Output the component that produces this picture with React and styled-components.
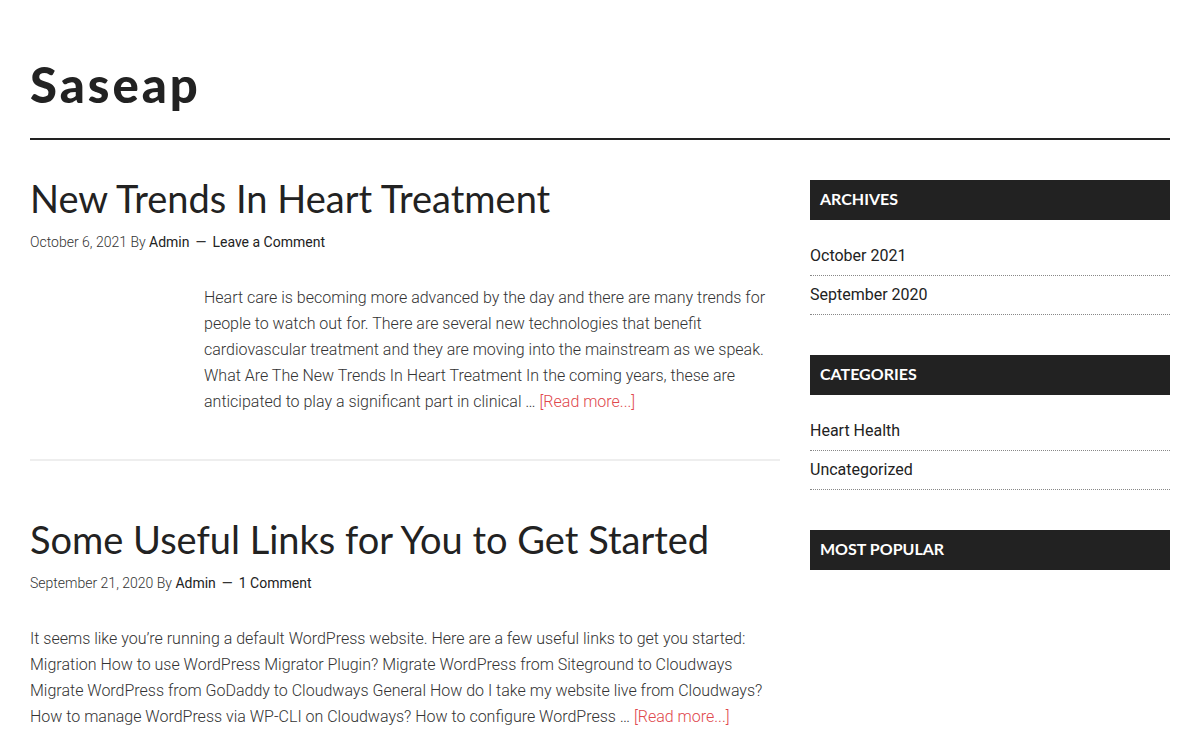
import styled, { createGlobalStyle } from 'styled-components'

const GlobalStyle = createGlobalStyle`
  body {
    margin: 0;
    background: #fff;
    color: #222;
    font-family: Roboto, "Liberation Sans", sans-serif;
  }
  a {
    text-decoration: none;
  }
`

const posts = [
  {
    title: 'New Trends In Heart Treatment',
    date: 'October 6, 2021',
    comments: 'Leave a Comment',
    indent: true,
    text: 'Heart care is becoming more advanced by the day and there are many trends for people to watch out for. There are several new technologies that benefit cardiovascular treatment and they are moving into the mainstream as we speak. What Are The New Trends In Heart Treatment In the coming years, these are anticipated to play a significant part in clinical …',
  },
  {
    title: 'Some Useful Links for You to Get Started',
    date: 'September 21, 2020',
    comments: '1 Comment',
    indent: false,
    text: 'It seems like you’re running a default WordPress website. Here are a few useful links to get you started: Migration How to use WordPress Migrator Plugin? Migrate WordPress from Siteground to Cloudways Migrate WordPress from GoDaddy to Cloudways General How do I take my website live from Cloudways? How to manage WordPress via WP-CLI on Cloudways? How to configure WordPress …',
  },
]

const widgets = [
  { title: 'Archives', items: ['October 2021', 'September 2020'] },
  { title: 'Categories', items: ['Heart Health', 'Uncategorized'] },
  { title: 'Most Popular', items: [] },
]

export default function App() {
  return (
    <>
      <GlobalStyle />
      <Page>
        <Header>
          <SiteTitle>Saseap</SiteTitle>
        </Header>
        <Columns>
          <Main>
            {posts.map((p, i) => (
              <Entry key={i} $last={i === posts.length - 1}>
                <EntryTitle>{p.title}</EntryTitle>
                <Meta>
                  {p.date} By <MetaLink>Admin</MetaLink>
                  <Dash>—</Dash>
                  <MetaLink>{p.comments}</MetaLink>
                </Meta>
                <Excerpt $indent={p.indent}>
                  {p.text} <More>[Read more...]</More>
                </Excerpt>
              </Entry>
            ))}
          </Main>
          <Sidebar>
            {widgets.map((w) => (
              <Widget key={w.title}>
                <WidgetTitle>{w.title}</WidgetTitle>
                {w.items.length > 0 && (
                  <WidgetList>
                    {w.items.map((it) => (
                      <WidgetItem key={it}>{it}</WidgetItem>
                    ))}
                  </WidgetList>
                )}
              </Widget>
            ))}
          </Sidebar>
        </Columns>
      </Page>
    </>
  )
}

const Page = styled.div`
  width: 1140px;
  margin: 0 auto;
`

const Header = styled.header`
  padding: 54px 0 24px;
  border-bottom: 2px solid #222;
`

const SiteTitle = styled.h1`
  margin: 0;
  font-family: Lato, "Open Sans", sans-serif;
  font-weight: 900;
  font-size: 49px;
  line-height: 60px;
  letter-spacing: 3px;
  color: #222;
`

const Columns = styled.div`
  display: flex;
  gap: 30px;
  padding-top: 40px;
`

const Main = styled.main`
  width: 750px;
`

const Entry = styled.article`
  padding-bottom: ${({ $last }) => ($last ? '0' : '44px')};
  margin-bottom: ${({ $last }) => ($last ? '0' : '60px')};
  border-bottom: ${({ $last }) => ($last ? 'none' : '2px solid #eee')};
`

const EntryTitle = styled.h2`
  margin: 0 0 14px;
  font-family: Lato, "Open Sans", sans-serif;
  font-weight: 400;
  font-size: 38px;
  line-height: 36px;
  color: #222;
`

const Meta = styled.p`
  margin: 0 0 31px;
  font-size: 14px;
  line-height: 24px;
  font-weight: 300;
  color: #333;
`

const MetaLink = styled.a`
  font-weight: 400;
  color: #222;
`

const Dash = styled.span`
  margin: 0 6px;
  font-weight: 400;
`

const Excerpt = styled.p`
  margin: 0;
  padding-left: ${({ $indent }) => ($indent ? '174px' : '0')};
  font-size: 16px;
  line-height: 26px;
  font-weight: 300;
  color: #333;
`

const More = styled.a`
  color: #e0474c;
`

const Sidebar = styled.aside`
  width: 360px;
`

const Widget = styled.section`
  margin-bottom: 40px;
`

const WidgetTitle = styled.h3`
  margin: 0;
  height: 40px;
  padding: 0 10px 3px;
  box-sizing: border-box;
  display: flex;
  align-items: center;
  background: #222;
  color: #fff;
  font-family: Lato, "Open Sans", sans-serif;
  font-weight: 700;
  font-size: 16px;
  text-transform: uppercase;
`

const WidgetList = styled.ul`
  list-style: none;
  margin: 17px 0 0;
  padding: 0;
`

const WidgetItem = styled.li`
  padding: 6px 0;
  border-bottom: 1px dotted #888;
  font-size: 16px;
  line-height: 26px;
  color: #222;
`
